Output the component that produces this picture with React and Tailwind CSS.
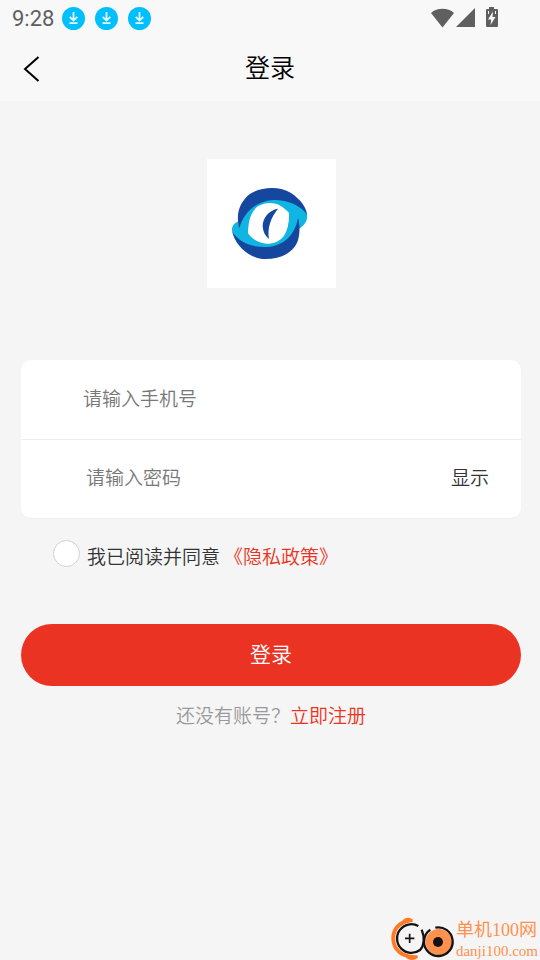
import { useState } from 'react';

function DownloadBadge() {
    return (
        <svg viewBox="0 0 24 24" className="h-6 w-6" aria-hidden="true">
            <circle cx="11.500" cy="11.500" r="11.5" fill="#00bfff" />
            <path d="M11.500 5v8.500M7.700 9.800l3.800 3.700 3.800-3.700M7.500 16.200h8" fill="none" stroke="#e6f8ff" strokeWidth="1.8" />
        </svg>
    );
}

function StatusBar() {
    return (
        <div className="flex h-9 items-center justify-between pl-3 pr-[42px] text-[#5f5f5f]">
            <div className="flex items-center gap-[9px] pt-[2px]">
                <span className="w-[41px] font-[Roboto,sans-serif] text-[22px] font-normal leading-6">9:28</span>
                <DownloadBadge />
                <DownloadBadge />
                <DownloadBadge />
            </div>
            <svg viewBox="0 0 68 22" className="h-[22px] w-[68px]" fill="#5f5f5f" aria-hidden="true">
                <path d="M1 6C7 .4 18 .4 24 6L12.500 20.500z" />
                <path d="M45 1v19H26z" />
                <path d="M59 0h5v2h3q1 0 1 1v16q0 1-1 1H57q-1 0-1-1V3q0-1 1-1h2z" />
                <path d="M63 4.500l-5 8h3.200L60.500 18l5-8h-3z" fill="#f8f8f8" />
                <path d="M58.500 4v3M65.500 4v3" stroke="#f8f8f8" strokeWidth="1" />
            </svg>
        </div>
    );
}

function Logo() {
    return (
        <svg viewBox="21 27 387 387" className="h-[129px] w-[129px] bg-white" role="img" aria-label="logo">
            <path
                d="M118 237L115 214C103 219 94 230 96 243C120 285 160 294 200 292C255 290 285 270 297 237C312 228 325 211 321 192C305 160 265 145 220 148C165 150 125 190 118 237z"
                fill="#11b5e2"
            />
            <path
                d="M118 237C108 195 116 169 136 145C155 123 185 114 216 114C258 114 280 131 299 151C312 165 320 180 321 194C302 165 260 149 220 150C170 152 129 187 118 237z"
                fill="#15479f"
            />
            <path
                d="M96 243C119 281 160 292 200 291C251 289 286 253 294 203C301 226 299 251 294 271C281 308 244 327 196 327C148 327 105 286 96 243z"
                fill="#15479f"
            />
            <path
                d="M144 250C145 226 147 205 158 187C168 168 186 160 209 159C234 159 251 171 267 189C268 218 263 241 252 257C239 274 222 281 201 281C177 280 158 269 144 250z"
                fill="#fff"
            />
            <path d="M234 176C207 180 187 205 188 229C189 246 196 259 207 267C201 236 212 203 234 176z" fill="#15479f" />
        </svg>
    );
}

function SiteMark() {
    return (
        <footer className="mt-auto flex items-end justify-end gap-[1px] pr-[2px]">
            <svg viewBox="33 36 192 129" className="h-[43px] w-16" aria-hidden="true">
                <path
                    d="M98 43C87 34 73 38 67 47C43 59 33 80 34 103C35 133 56 152 77 157C87 168 107 167 114 157L112 151C96 151 74 148 60 135C45 121 42 98 49 81C57 65 71 55 98 51z"
                    fill="#ff7a22"
                />
                <path
                    d="M115 63A43 43 0 1 0 120 135C133 122 135 98 125 74"
                    fill="none"
                    stroke="#171314"
                    strokeWidth="7"
                />
                <path d="M75 100h28M89 86v28" stroke="#171314" strokeWidth="5" />
                <circle cx="176" cy="111" r="39" fill="#ff914d" />
                <path
                    d="M151 74C138 82 132 96 132 111A43 43 0 1 0 166 68"
                    fill="none"
                    stroke="#171314"
                    strokeWidth="7"
                />
                <circle cx="174" cy="111" r="15" fill="#171314" />
            </svg>
            <div className="flex flex-col font-['Liberation_Serif','Noto_Sans_CJK_SC',serif] font-normal text-[#ff914d]">
                <span className="text-[18px] leading-6">单机100网</span>
                <span className="text-[15px] leading-[18px]">danji100.com</span>
            </div>
        </footer>
    );
}

export default function App() {
    const [phone, setPhone] = useState('');
    const [password, setPassword] = useState('');
    const [showPassword, setShowPassword] = useState(false);
    const [agreed, setAgreed] = useState(false);

    return (
        <div className="flex min-h-screen flex-col bg-[#f5f5f5] font-['Noto_Sans_CJK_SC',sans-serif] text-[19px] font-[350] leading-7 text-[#333]">
            <header className="bg-[#f8f8f8]">
                <StatusBar />
                <div className="grid h-[65px] grid-cols-[1fr_auto_1fr] items-center">
                    <button type="button" aria-label="返回" className="ml-5 w-6">
                        <svg viewBox="0 0 24 28" className="h-7 w-6" fill="none" stroke="#000" strokeWidth="2">
                            <path d="M18.500 2L5 14l13.500 12" />
                        </svg>
                    </button>
                    <h1 className="pb-[5px] text-[25px] font-[350] leading-9 text-black">登录</h1>
                </div>
            </header>

            <main className="flex flex-col pl-[21px] pr-[19px] pt-[58px]">
                <div className="flex justify-center">
                    <Logo />
                </div>

                <form className="mt-[72px] flex flex-col" onSubmit={e => e.preventDefault()}>
                    <div className="rounded-[10px] border-b border-[#eee] bg-white">
                        <div className="flex h-20 items-center border-b border-[#eee] pb-1 pl-[62px] pr-8">
                            <input
                                type="tel"
                                aria-label="手机号"
                                placeholder="请输入手机号"
                                value={phone}
                                onChange={e => setPhone(e.target.value)}
                                className="min-w-0 flex-1 bg-transparent outline-none placeholder:text-[#777]"
                            />
                        </div>
                        <div className="flex h-[78px] items-center pb-1 pl-[65px] pr-8">
                            <input
                                type={showPassword ? 'text' : 'password'}
                                aria-label="密码"
                                placeholder="请输入密码"
                                value={password}
                                onChange={e => setPassword(e.target.value)}
                                className="min-w-0 flex-1 bg-transparent outline-none placeholder:text-[#777]"
                            />
                            <button type="button" onClick={() => setShowPassword(!showPassword)}>
                                {showPassword ? '隐藏' : '显示'}
                            </button>
                        </div>
                    </div>

                    <div className="mt-[21px] flex gap-[7px] pl-8">
                        <input
                            id="agree"
                            type="checkbox"
                            checked={agreed}
                            onChange={e => setAgreed(e.target.checked)}
                            className="h-[27px] w-[27px] appearance-none rounded-full border border-[#d1d1d1] bg-white checked:bg-[#eb3323]"
                        />
                        <div className="flex gap-1 pt-[2px]">
                            <label htmlFor="agree">我已阅读并同意</label>
                            <a href="#privacy" className="text-[#eb3323]">《隐私政策》</a>
                        </div>
                    </div>

                    <button type="submit" className="mt-[54px] h-[62px] rounded-full bg-[#eb3323] pb-1 text-[21px] text-white">
                        登录
                    </button>
                </form>

                <p className="mt-[15px] text-center text-[#999]">
                    还没有账号？<a href="#register" className="text-[#eb3323]">立即注册</a>
                </p>
            </main>

            <SiteMark />
        </div>
    );
}
